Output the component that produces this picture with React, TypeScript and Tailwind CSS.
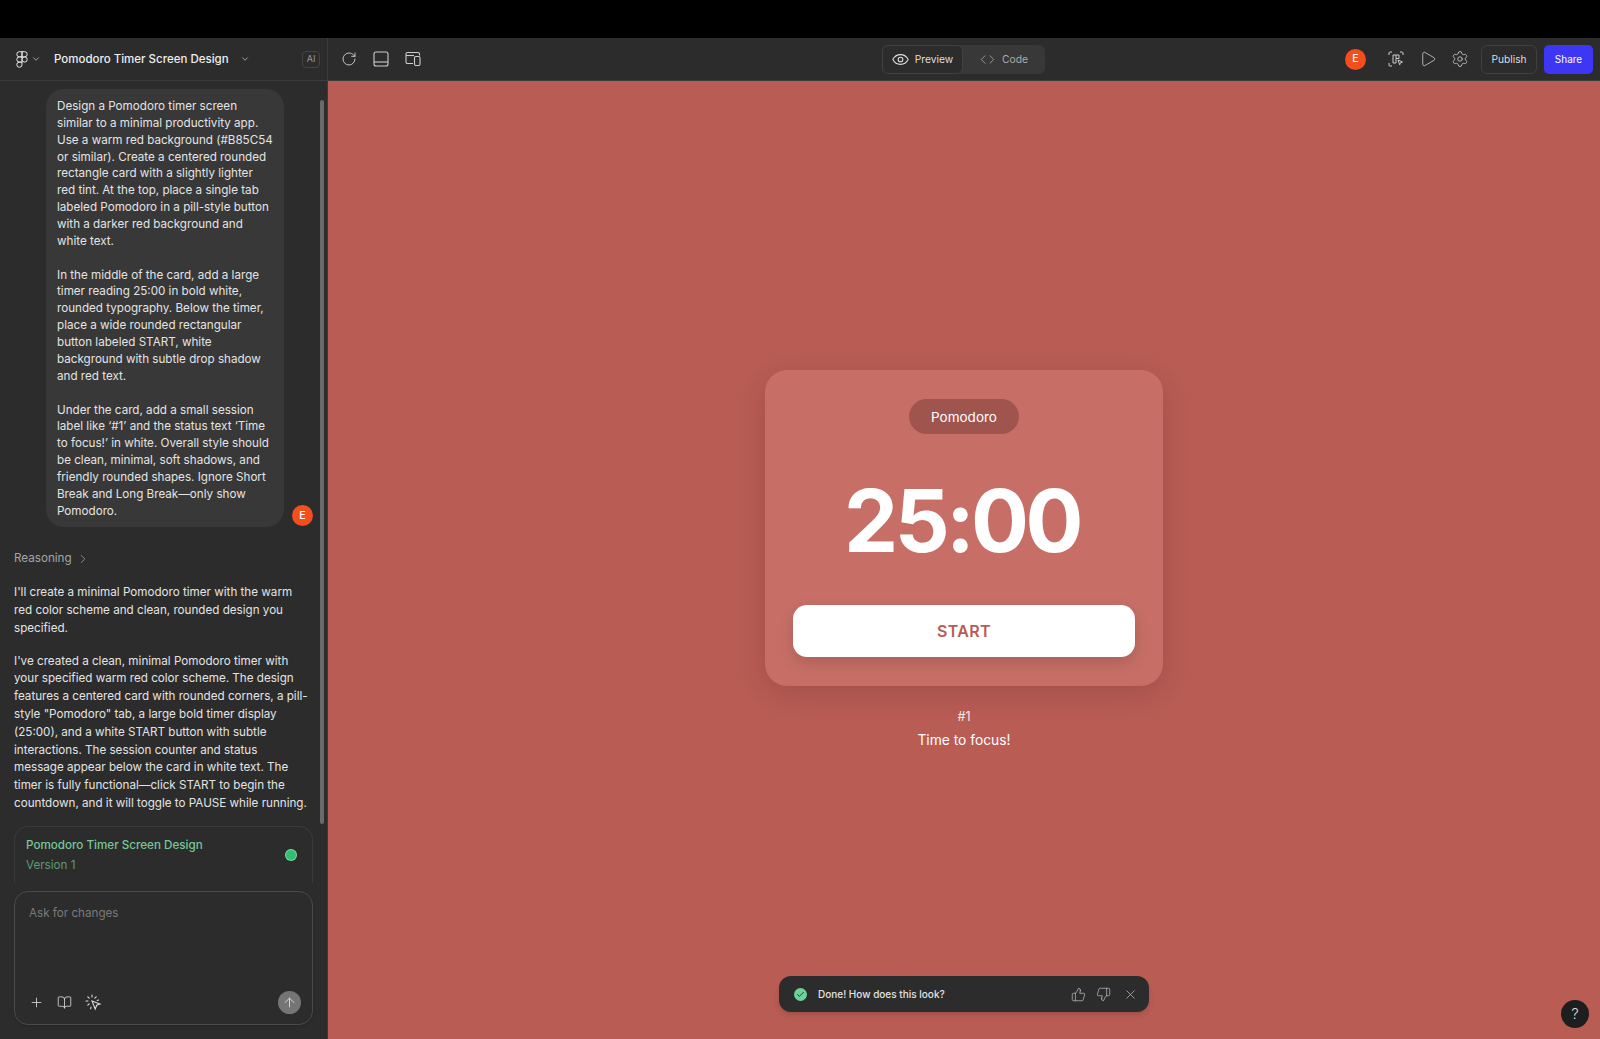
import { ArrowUp, ChevronDown, ChevronRight, Check, Code, Plus, RotateCw, Play, Settings, ThumbsDown, ThumbsUp, X, BookOpen } from 'lucide-react'

const font = "font-['Inter',sans-serif]"

function FigmaLogo() {
  return (
    <svg width="12" height="17" viewBox="0 0 12 17" fill="none" stroke="currentColor" strokeWidth="1">
      <path d="M6 .7H3.4a2.6 2.6 0 0 0 0 5.2H6V.7Z" />
      <path d="M6 .7h2.6a2.6 2.6 0 0 1 0 5.2H6V.7Z" />
      <path d="M6 5.9H3.4a2.6 2.6 0 0 0 0 5.2H6V5.9Z" />
      <circle cx="8.6" cy="8.5" r="2.6" />
      <path d="M6 11.1H3.4A2.6 2.6 0 1 0 6 13.7v-2.6Z" />
    </svg>
  )
}

function PanelIcon() {
  return (
    <svg width="16" height="16" viewBox="0 0 16 16" fill="none" stroke="currentColor" strokeWidth="1.1">
      <rect x="1" y="1" width="14" height="14" rx="2" />
      <path d="M1 11h14" />
    </svg>
  )
}

function DevicesIcon() {
  return (
    <svg width="16" height="16" viewBox="0 0 16 16" fill="none" stroke="currentColor" strokeWidth="1.1">
      <path d="M8 12.5H2.5a1.5 1.5 0 0 1-1.5-1.5V3a1.5 1.5 0 0 1 1.5-1.5H13A1.5 1.5 0 0 1 14.5 3v1.5" />
      <rect x="9.5" y="5.5" width="5.5" height="9" rx="1.2" />
      <path d="M1 4.5h8" />
    </svg>
  )
}

function EyeIcon() {
  return (
    <svg width="17" height="17" viewBox="0 0 16 16" fill="none" stroke="currentColor" strokeWidth="1">
      <path d="M.8 8c1.5-3 4-4.6 7.2-4.6S13.700 5 15.200 8c-1.500 3-4 4.600-7.200 4.600S2.300 11 .8 8Z" />
      <circle cx="8" cy="8" r="2.200" />
    </svg>
  )
}

function MakeIcon() {
  return (
    <svg width="16" height="16" viewBox="0 0 16 16" fill="none" stroke="currentColor" strokeWidth="1">
      <path d="M1 4V2a1 1 0 0 1 1-1h2M12 1h2a1 1 0 0 1 1 1v2M1 12v2a1 1 0 0 0 1 1h2" />
      <path d="M5 4h6v3.500H8V12H5V4ZM8 4v3.500" />
      <path d="M10 9l4.500 2-2 .8-.8 2L10 9Z" />
    </svg>
  )
}

function CursorSparkIcon() {
  return (
    <svg width="17" height="17" viewBox="0 0 17 17" fill="none" stroke="currentColor" strokeWidth="1.1" strokeLinecap="round">
      <path d="M7 7l8 3-3.300 1.300L10.200 15 7 7Z" />
      <path d="M7 1v2M2.800 2.800l1.400 1.400M1 7h2M2.800 11.200l1.400-1.400M11.200 2.800 9.800 4.200M13.500 6l-1.300.6M6 13l-.4 1.800" />
    </svg>
  )
}

function Avatar({ size }: { size: string }) {
  return (
    <div className={`flex items-center justify-center rounded-full bg-[#F24E1E] text-[10.5px] font-medium text-white ${size}`}>
      E
    </div>
  )
}

function Header() {
  return (
    <header className="flex h-[43px] shrink-0 items-center border-b border-[#3c3c3c] bg-[#2c2c2c] text-[#e6e6e6]">
      <div className="flex h-full w-[328px] shrink-0 items-center border-r border-[#3c3c3c] pl-[16px] pr-[7px]">
        <FigmaLogo />
        <ChevronDown className="ml-[3px] h-[10px] w-[10px] text-[#bbbbbb]" strokeWidth={2} />
        <span className="ml-[13px] mt-[2px] text-[11.5px] font-medium text-[#eeeeee]">Pomodoro Timer Screen Design</span>
        <ChevronDown className="ml-[11px] h-[10px] w-[10px] text-[#bbbbbb]" strokeWidth={2} />
        <span className="ml-auto flex h-[17px] w-[18px] items-center justify-center rounded-[4px] border border-[#444444] text-[9px] text-[#999999]">
          AI
        </span>
      </div>
      <div className="ml-[13px] flex items-center gap-[16px] text-[#cccccc]">
        <RotateCw className="h-4 w-4" strokeWidth={1.4} />
        <PanelIcon />
        <DevicesIcon />
      </div>
      <div className="ml-[461px] flex h-[29px] w-[163px] rounded-[6px] bg-[#383838] text-[10.3px]">
        <button className="flex w-[81px] items-center justify-center gap-[6px] rounded-[6px] border border-[#404040] bg-[#2c2c2c] text-[#dddddd]">
          <EyeIcon />
          <span className="mt-[2px]">Preview</span>
        </button>
        <button className="flex flex-1 items-center justify-center gap-[7px] text-[#aaaaaa]">
          <Code className="h-[15px] w-[15px]" strokeWidth={1.3} />
          <span className="mt-[2px]">Code</span>
        </button>
      </div>
      <Avatar size="ml-auto h-[21px] w-[21px]" />
      <div className="ml-[22px] flex items-center gap-[14px] text-[#cccccc]">
        <span className="mr-[1px]">
          <MakeIcon />
        </span>
        <Play className="h-[18px] w-[18px]" strokeWidth={1.1} />
        <Settings className="h-[18px] w-[18px]" strokeWidth={1.1} />
      </div>
      <button className="ml-[12px] h-[29px] w-[56px] rounded-[6px] border border-[#404040] pt-[2px] text-[10.2px] text-[#dddddd]">Publish</button>
      <button className="ml-[7px] mr-[7px] h-[29px] w-[49px] rounded-[5px] bg-[#3d37f5] pt-[1px] text-[10px] text-white">Share</button>
    </header>
  )
}

function Sidebar() {
  return (
    <aside className="relative flex w-[328px] shrink-0 flex-col border-r border-[#3c3c3c] bg-[#2c2c2c] text-[11.65px] leading-[17.8px] text-[#e3e3e3]">
      <div className="absolute left-[320px] top-[19px] h-[724px] w-[4px] rounded-full bg-[#6a6a6a]" />
      <div className="min-h-0 flex-1 overflow-hidden pl-[14px] pr-[16px] pt-[8px]">
        <div className="relative">
          <div className="ml-[32px] w-[238px] rounded-[18px] bg-[#383838] pb-[8px] pl-[11px] pr-[10.5px] pt-[9px] leading-[16.85px]">
            <p>
              Design a Pomodoro timer screen similar to a minimal productivity app. Use a warm red background (#B85C54 or similar). Create a centered rounded rectangle card with a slightly lighter red tint. At the top, place a single tab labeled Pomodoro in a pill-style button with a darker red background and white text.
            </p>
            <p className="mt-[17px]">
              In the middle of the card, add a large timer reading 25:00 in bold white, rounded typography. Below the timer, place a wide rounded rectangular button labeled START, white background with subtle drop shadow and red text.
            </p>
            <p className="mt-[17px]">
              Under the card, add a small session label like ‘#1’ and the status text ‘Time to focus!’ in white. Overall style should be clean, minimal, soft shadows, and friendly rounded shapes. Ignore Short Break and Long Break—only show Pomodoro.
            </p>
          </div>
          <Avatar size="absolute right-[-2px] bottom-[1px] h-[21px] w-[21px]" />
        </div>
        <div className="mt-[23px] flex items-center gap-[4px] text-[#a5a5a5]">
          Reasoning
          <ChevronRight className="h-[14px] w-[14px]" strokeWidth={1.3} />
        </div>
        <p className="mt-[16px]">I'll create a minimal Pomodoro timer with the warm red color scheme and clean, rounded design you specified.</p>
        <p className="mt-[15px] pr-[2px]">
          I've created a clean, minimal Pomodoro timer with your specified warm red color scheme. The design features a centered card with rounded corners, a pill-style "Pomodoro" tab, a large bold timer display (25:00), and a white START button with subtle interactions. The session counter and status message appear below the card in white text. The timer is fully functional—click START to begin the countdown, and it will toggle to PAUSE while running.
        </p>
        <div className="mt-[13px] flex h-[58px] w-[299px] items-center justify-between rounded-t-[14px] border border-b-0 border-[#3a3a3a] pl-[11px] pr-[16px] pt-[2px]">
          <div>
            <div className="font-medium text-[#75c797]">Pomodoro Timer Screen Design</div>
            <div className="mt-[2px] text-[#5c9a76]">Version 1</div>
          </div>
          <span className="mb-[2px] h-[10px] w-[10px] rounded-full bg-[#2fbf71] ring-1 ring-[#7fd8a6]" />
        </div>
      </div>
      <div className="mb-[14px] ml-[14px] mt-[8px] flex h-[134px] w-[299px] shrink-0 flex-col rounded-[14px] border border-[#4a4a4a] pb-[10px] pl-[14px] pr-[11px] pt-[13px] shadow-sm">
        <span className="text-[#7a7a7a]">Ask for changes</span>
        <div className="mt-auto flex items-center text-[#dddddd]">
          <Plus className="h-[15px] w-[15px]" strokeWidth={1.3} />
          <BookOpen className="ml-[13px] h-[15px] w-[15px]" strokeWidth={1.3} />
          <span className="ml-[13px]">
            <CursorSparkIcon />
          </span>
          <button className="ml-auto flex h-[23px] w-[23px] items-center justify-center rounded-full bg-[#757575] text-[#e8e8e8]">
            <ArrowUp className="h-[15px] w-[15px]" strokeWidth={1.3} />
          </button>
        </div>
      </div>
    </aside>
  )
}

function Timer() {
  return (
    <div className="flex flex-col items-center text-white">
      <div className="flex h-[316px] w-[398px] flex-col items-center rounded-[22px] bg-[#c76f66] px-[28px] pt-[29px] shadow-[0_8px_28px_rgba(0,0,0,0.12)]">
        <div className="flex h-[35px] w-[110px] items-center justify-center rounded-full bg-[#a0544e] pt-[1px] text-[13.5px] font-normal">Pomodoro</div>
        <div className="mr-[4px] mt-[34px] text-[86px] font-bold leading-[106px] tracking-[-0.042em]">25:00</div>
        <button className="mt-[31px] h-[52px] w-[342px] rounded-[14px] bg-white text-[16px] font-semibold tracking-[0.02em] text-[#b85c54] shadow-[0_6px_16px_rgba(0,0,0,0.14)]">
          START
        </button>
      </div>
      <div className="mt-[23px] text-[12.5px] leading-[16px] text-[#f6e6e4]">#1</div>
      <div className="mt-[5px] text-[13.8px] font-normal leading-[20px]">Time to focus!</div>
    </div>
  )
}

export default function App() {
  return (
    <div className={`flex h-[1039px] w-[1600px] flex-col overflow-hidden bg-black ${font}`}>
      <div className="h-[38px] shrink-0 bg-black" />
      <Header />
      <div className="flex min-h-0 flex-1">
        <Sidebar />
        <main className="relative flex flex-1 items-center justify-center bg-[#b85c54]">
          <Timer />
          <div className="absolute bottom-[27px] left-[451px] flex h-[36px] w-[370px] items-center rounded-[12px] bg-[#2c2c2c] pl-[15px] pr-[11px] text-[10px] font-medium text-[#e3e3e3] shadow-md">
            <span className="flex h-[13px] w-[13px] items-center justify-center rounded-full bg-[#6fd19a] text-[#1f3d2c]">
              <Check className="h-[9px] w-[9px]" strokeWidth={2.5} />
            </span>
            <span className="ml-[11px]">Done! How does this look?</span>
            <div className="ml-auto flex items-center gap-[10px] text-[#c8c8c8]">
              <ThumbsUp className="h-[15px] w-[15px]" strokeWidth={1.1} />
              <ThumbsDown className="h-[15px] w-[15px]" strokeWidth={1.1} />
              <X className="ml-[2px] h-[15px] w-[15px]" strokeWidth={1.1} />
            </div>
          </div>
          <div className="absolute bottom-[11px] right-[11px] flex h-[28px] w-[28px] items-center justify-center rounded-full bg-[#1e1e1e] text-[15px] font-light text-[#dddddd]">?</div>
        </main>
      </div>
    </div>
  )
}
